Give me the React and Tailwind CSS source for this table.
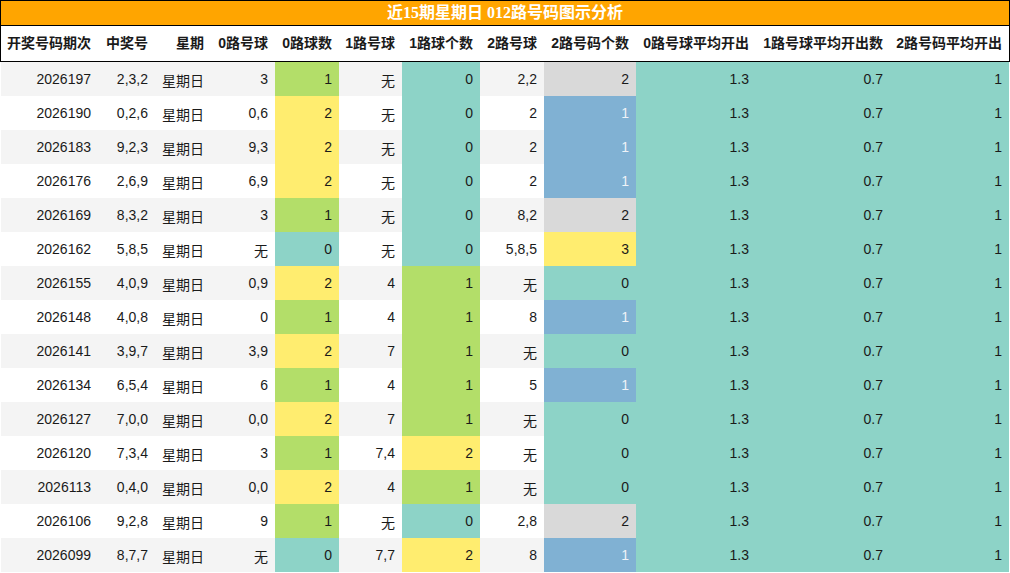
import React from "react";

const cols = "grid-cols-[97px_57px_56px_64px_64px_63px_78px_64px_92px_120px_134px_119px]";

const headers = [
  "开奖号码期次",
  "中奖号",
  "星期",
  "0路号球",
  "0路球数",
  "1路号球",
  "1路球个数",
  "2路号球",
  "2路号码个数",
  "0路号球平均开出",
  "1路号球平均开出数",
  "2路号码平均开出",
];

// [期次, 中奖号, 0路号球, 0路球数, 1路号球, 1路球个数, 2路号球, 2路号码个数]
const rows = [
  ["2026197", "2,3,2", "3", 1, "无", 0, "2,2", 2],
  ["2026190", "0,2,6", "0,6", 2, "无", 0, "2", 1],
  ["2026183", "9,2,3", "9,3", 2, "无", 0, "2", 1],
  ["2026176", "2,6,9", "6,9", 2, "无", 0, "2", 1],
  ["2026169", "8,3,2", "3", 1, "无", 0, "8,2", 2],
  ["2026162", "5,8,5", "无", 0, "无", 0, "5,8,5", 3],
  ["2026155", "4,0,9", "0,9", 2, "4", 1, "无", 0],
  ["2026148", "4,0,8", "0", 1, "4", 1, "8", 1],
  ["2026141", "3,9,7", "3,9", 2, "7", 1, "无", 0],
  ["2026134", "6,5,4", "6", 1, "4", 1, "5", 1],
  ["2026127", "7,0,0", "0,0", 2, "7", 1, "无", 0],
  ["2026120", "7,3,4", "3", 1, "7,4", 2, "无", 0],
  ["2026113", "0,4,0", "0,0", 2, "4", 1, "无", 0],
  ["2026106", "9,2,8", "9", 1, "无", 0, "2,8", 2],
  ["2026099", "8,7,7", "无", 0, "7,7", 2, "8", 1],
];

// colour for the 0路 / 1路 count columns
const countColor = (n) => {
  if (n === 0) return "bg-[#8dd3c7]";
  if (n === 1) return "bg-[#b3de69]";
  return "bg-[#ffed6f]";
};

// colour for the 2路 count column
const twoColor = (n) => {
  if (n === 0) return "bg-[#8dd3c7]";
  if (n === 1) return "bg-[#80b1d3] text-[#eef3f8]";
  if (n === 2) return "bg-[#d9d9d9]";
  return "bg-[#ffed6f]";
};

// CJK text sits a little lower than the digits in the sheet
const Val = ({ v }) =>
  v === "无" || v === "星期日" ? <span className="translate-y-[2px]">{v}</span> : <span>{v}</span>;

const Cell = ({ children, className = "" }) => (
  <div className={`h-[34px] flex items-center justify-end pr-[7px] ${className}`}>{children}</div>
);

const App = () => {
  return (
    <div
      className="w-[1010px] h-[573px] bg-white text-[#1a1a1a] overflow-hidden"
      style={{ fontFamily: '"Liberation Sans", "Noto Sans CJK SC", sans-serif' }}
    >
      <div className="h-[26px] border border-black bg-[#ffa500] flex items-center justify-center">
        <span
          className="text-white font-bold text-[16px] leading-none"
          style={{ fontFamily: '"Liberation Serif", "Noto Sans CJK SC", serif' }}
        >
          近15期星期日 012路号码图示分析
        </span>
      </div>

      <div className={`grid ${cols} h-[36px] border-x border-b border-black`}>
        {headers.map((h, i) => (
          <div
            key={i}
            className="flex items-center justify-end pr-[7px] text-[14px] font-bold whitespace-nowrap"
          >
            {h}
          </div>
        ))}
      </div>

      <div className="px-px">
        {rows.map((r, i) => (
          <div
            key={r[0]}
            className={`grid ${cols} text-[14px] ${i % 2 === 0 ? "bg-[#f4f4f4]" : "bg-white"}`}
          >
            <Cell>{r[0]}</Cell>
            <Cell>{r[1]}</Cell>
            <Cell className="justify-start pl-[7px]">
              <Val v="星期日" />
            </Cell>
            <Cell>
              <Val v={r[2]} />
            </Cell>
            <Cell className={countColor(r[3])}>{r[3]}</Cell>
            <Cell>
              <Val v={r[4]} />
            </Cell>
            <Cell className={countColor(r[5])}>{r[5]}</Cell>
            <Cell>
              <Val v={r[6]} />
            </Cell>
            <Cell className={twoColor(r[7])}>{r[7]}</Cell>
            <Cell className="bg-[#8dd3c7]">1.3</Cell>
            <Cell className="bg-[#8dd3c7]">0.7</Cell>
            <Cell className="bg-[#8dd3c7]">1</Cell>
          </div>
        ))}
      </div>
    </div>
  );
};

export default App;
